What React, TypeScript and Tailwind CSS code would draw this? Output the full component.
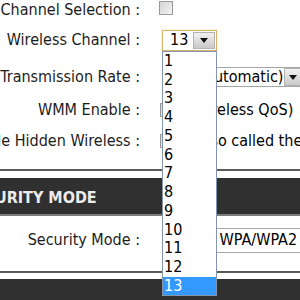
const channels = ['1', '2', '3', '4', '5', '6', '7', '8', '9', '10', '11', '12', '13'];

function Checkbox() {
  return (
    <span className="inline-block shrink-0 w-[14px] h-[14px] border border-[#9a9a9a] bg-gradient-to-br from-[#d4d4d4] to-[#f4f4f4]" />
  );
}

function ArrowButton({ className }: { className: string }) {
  return (
    <span className={`flex shrink-0 items-center justify-center border border-[#b4b4b4] bg-gradient-to-b from-[#f2f2f2] to-[#c9c9c9] ${className}`}>
      <svg width="8" height="5" viewBox="0 0 8 5">
        <path d="M0 0 L8 0 L4 5 Z" fill="#111" />
      </svg>
    </span>
  );
}

function Row({ label, height, children }: { label: string; height: string; children?: React.ReactNode }) {
  return (
    <div className={`flex items-center ${height}`}>
      <div className="w-[220px] shrink-0 flex justify-end whitespace-nowrap text-[#1c1c1c]">{label}</div>
      <div className="pl-[20px] flex items-center whitespace-nowrap">{children}</div>
    </div>
  );
}

export default function App() {
  return (
    <div
      className="w-[300px] h-[300px] overflow-hidden bg-white text-[16px] leading-none text-black"
      style={{ fontFamily: '"DejaVu Sans Condensed", "DejaVu Sans", sans-serif', fontStretch: 'condensed' }}
    >
      <div className="-ml-[80px] w-[460px]">
        <div className="border-b-2 border-[#5a5a5a] pb-[13px]">
          <Row label="Enable Auto Channel Selection :" height="h-[20px]">
            <span className="-mt-[4px] -ml-[1px] flex"><Checkbox /></span>
          </Row>
          <Row label="Wireless Channel :" height="h-[40px]">
            <div className="relative ml-[2px]">
              <div className="flex items-center justify-between w-[55px] h-[21px] border border-[#d6b66c] shadow-[0_0_2px_#e8d49c] bg-white pl-[7px] pr-[1px]">
                <span>13</span>
                <ArrowButton className="w-[22px] h-[17px]" />
              </div>
              <div className="absolute left-0 top-full z-10 w-[55px] bg-white border border-[#8496ab]">
                {channels.map((c) => (
                  <div
                    key={c}
                    className={`h-[18.75px] flex items-center pl-[1px] ${c === '13' ? 'bg-[#3399ff] text-white' : 'text-black'}`}
                  >
                    {c}
                  </div>
                ))}
              </div>
            </div>
          </Row>
          <Row label="Transmission Rate :" height="h-[34px]">
            <div className="ml-[2px] flex items-center justify-between w-[140px] h-[20px] border border-[#a5a5a5] bg-white pl-0">
              <span>Best (automatic)</span>
              <ArrowButton className="w-[17px] h-[18px]" />
            </div>
            <span className="ml-[4px]">(Mbit/s)</span>
          </Row>
          <Row label="WMM Enable :" height="h-[32px]">
            <Checkbox />
            <span className="ml-[14px]">(Wireless QoS)</span>
          </Row>
          <Row label="Enable Hidden Wireless :" height="h-[30px]">
            <Checkbox />
            <span className="ml-[18px]">(also called the SSID Broadcast)</span>
          </Row>
        </div>

        <div className="mt-[7px] border-b-2 border-[#5a5a5a]">
          <div className="h-[38px] bg-[#303030] border-b-2 border-[#7d7d7d] flex items-center overflow-hidden">
            <span
              className="-ml-[42px] mt-[3px] font-bold text-[16px] text-[#ececec] whitespace-nowrap"
              style={{ fontStretch: 'normal' }}
            >
              WIRELESS SECURITY MODE
            </span>
          </div>
          <div className="h-[55px] pb-[7px] flex items-center">
            <div className="w-[220px] shrink-0 flex justify-end whitespace-nowrap text-[#1c1c1c]">Security Mode :</div>
            <div className="pl-[22px] shrink-0">
              <div className="flex items-center w-[260px] h-[25px] border border-[#a5a5a5] bg-white pl-[3px] whitespace-nowrap">
                Enable WPA/WPA2 Wireless Security (enhanced)
              </div>
            </div>
          </div>
        </div>

        <div className="mt-[6px] h-[40px] bg-[#303030]" />
      </div>
    </div>
  );
}
